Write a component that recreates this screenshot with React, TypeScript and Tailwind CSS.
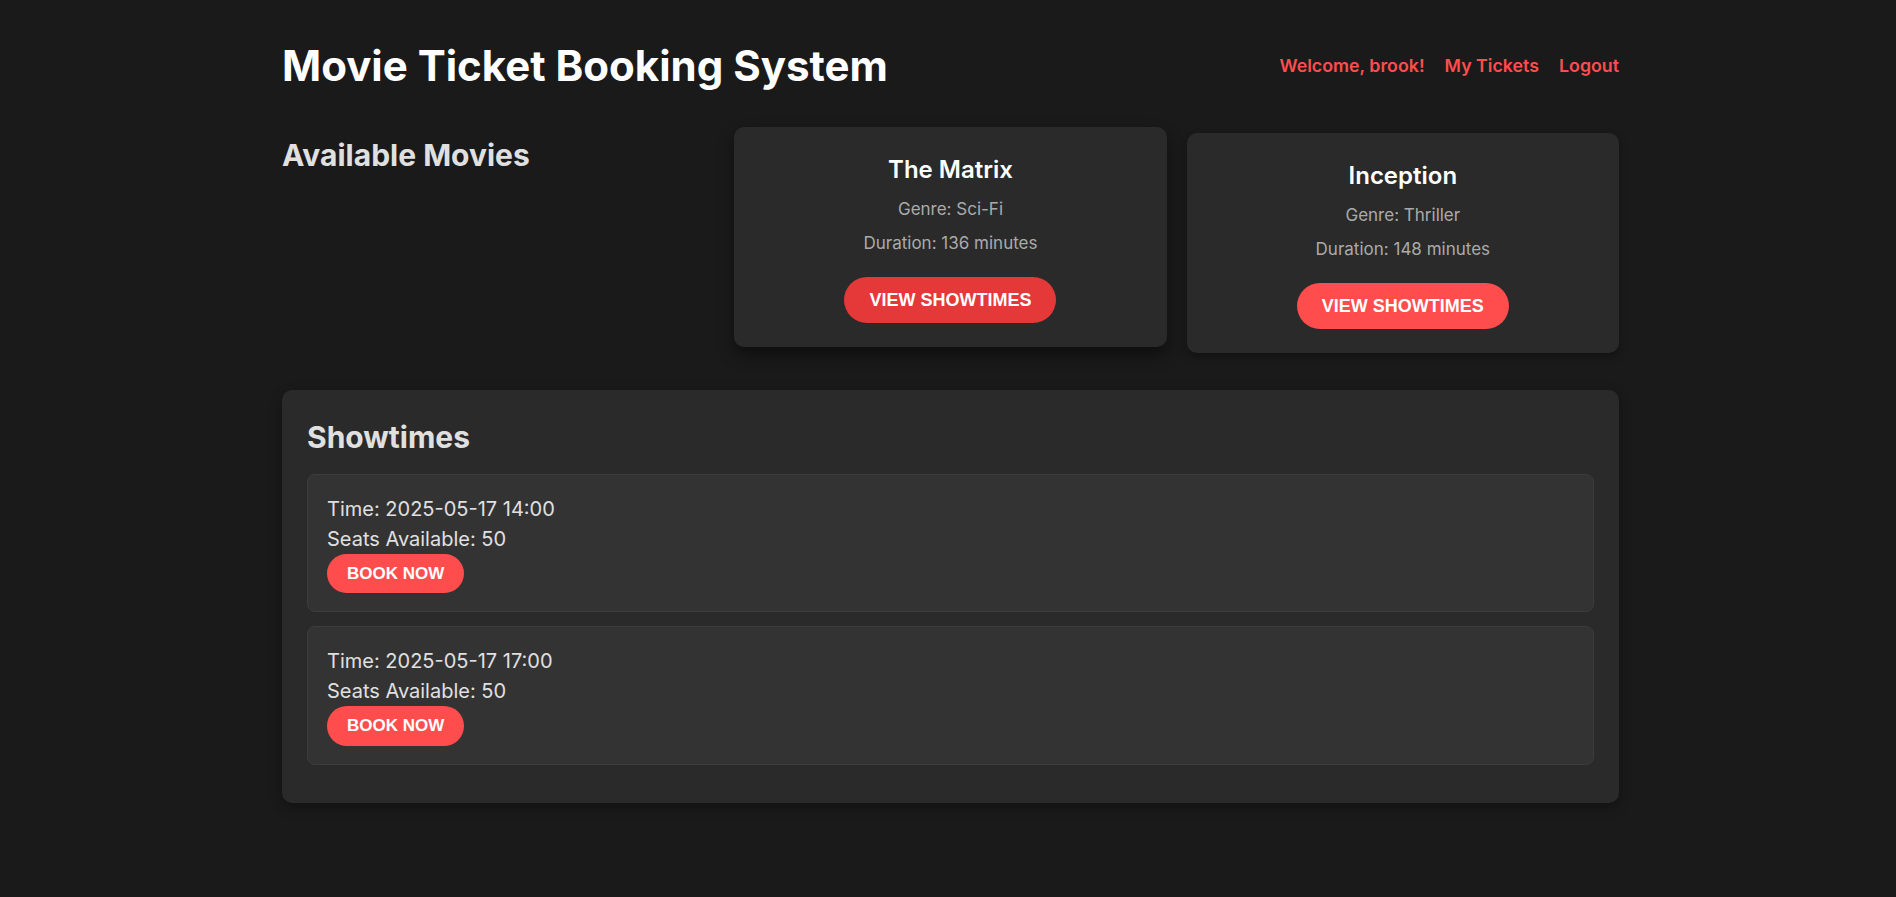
import React from "react";

const movies = [
  { title: "The Matrix", genre: "Sci-Fi", duration: 136, hovered: true },
  { title: "Inception", genre: "Thriller", duration: 148, hovered: false },
];

const showtimes = [
  { time: "2025-05-17 14:00", seats: 50 },
  { time: "2025-05-17 17:00", seats: 50 },
];

export default function App() {
  return (
    <div className="min-h-screen bg-[#1a1a1a] font-['Inter','Noto_Sans',sans-serif]">
      <div className="w-[1337px] ml-[282px] pt-[41px]">
        <header className="flex items-center justify-between">
          <h1 className="text-[42px] leading-[50px] font-bold text-white">Movie Ticket Booking System</h1>
          <nav className="flex gap-5 text-[17.8px] leading-[24px] font-semibold text-[#ff4d4d]">
            <span>Welcome, brook!</span>
            <a>My Tickets</a>
            <a>Logout</a>
          </nav>
        </header>

        <section className="grid grid-cols-3 gap-5 mt-[42px] items-start">
          <h2 className="mt-[4px] text-[30px] leading-[36px] font-bold text-[#e0e0e0]">Available Movies</h2>
          {movies.map((m) => (
            <div
              key={m.title}
              className={
                m.hovered
                  ? "-translate-y-[6px] rounded-[10px] bg-[#2a2a2a] p-6 flex flex-col items-center text-center shadow-[0_8px_16px_rgba(0,0,0,0.45)]"
                  : "rounded-[10px] bg-[#2a2a2a] p-6 flex flex-col items-center text-center shadow-[0_4px_8px_rgba(0,0,0,0.3)]"
              }
            >
              <h3 className="text-[24px] leading-[37.5px] font-semibold text-white">{m.title}</h3>
              <p className="mt-2 text-[17px] leading-[25.5px] text-[#aaaaaa]">Genre: {m.genre}</p>
              <p className="mt-[9px] text-[17px] leading-[25.5px] text-[#aaaaaa]">Duration: {m.duration} minutes</p>
              <button
                className={
                  m.hovered
                    ? "mt-[20px] rounded-full bg-[#e53939] px-[25px] py-3 font-['Liberation_Sans',Arial,sans-serif] text-[18px] leading-[22px] font-bold uppercase text-white"
                    : "mt-[20px] rounded-full bg-[#ff4d4d] px-[25px] py-3 font-['Liberation_Sans',Arial,sans-serif] text-[18px] leading-[22px] font-bold uppercase text-white"
                }
              >
                View Showtimes
              </button>
            </div>
          ))}
        </section>

        <section className="mt-[37px] rounded-[10px] bg-[#2a2a2a] px-[25px] pt-[29px] pb-[24px] shadow-[0_4px_12px_rgba(0,0,0,0.35)]">
          <h2 className="mb-[19px] text-[30px] leading-[36px] font-bold text-[#e0e0e0]">Showtimes</h2>
          {showtimes.map((s) => (
            <div key={s.time} className="mb-[14px] rounded-lg border border-[#3c3c3c] bg-[#333333] px-[19px] pt-[19px] pb-[18px]">
              <p className="text-[20px] leading-[30px] text-[#e0e0e0]">Time: {s.time}</p>
              <p className="text-[20px] leading-[30px] text-[#e0e0e0]">Seats Available: {s.seats}</p>
              <button className="rounded-full bg-[#ff4d4d] px-5 py-[10px] font-['Liberation_Sans',Arial,sans-serif] text-[17px] leading-[19.5px] font-bold uppercase text-white">
                Book Now
              </button>
            </div>
          ))}
        </section>
      </div>
    </div>
  );
}
